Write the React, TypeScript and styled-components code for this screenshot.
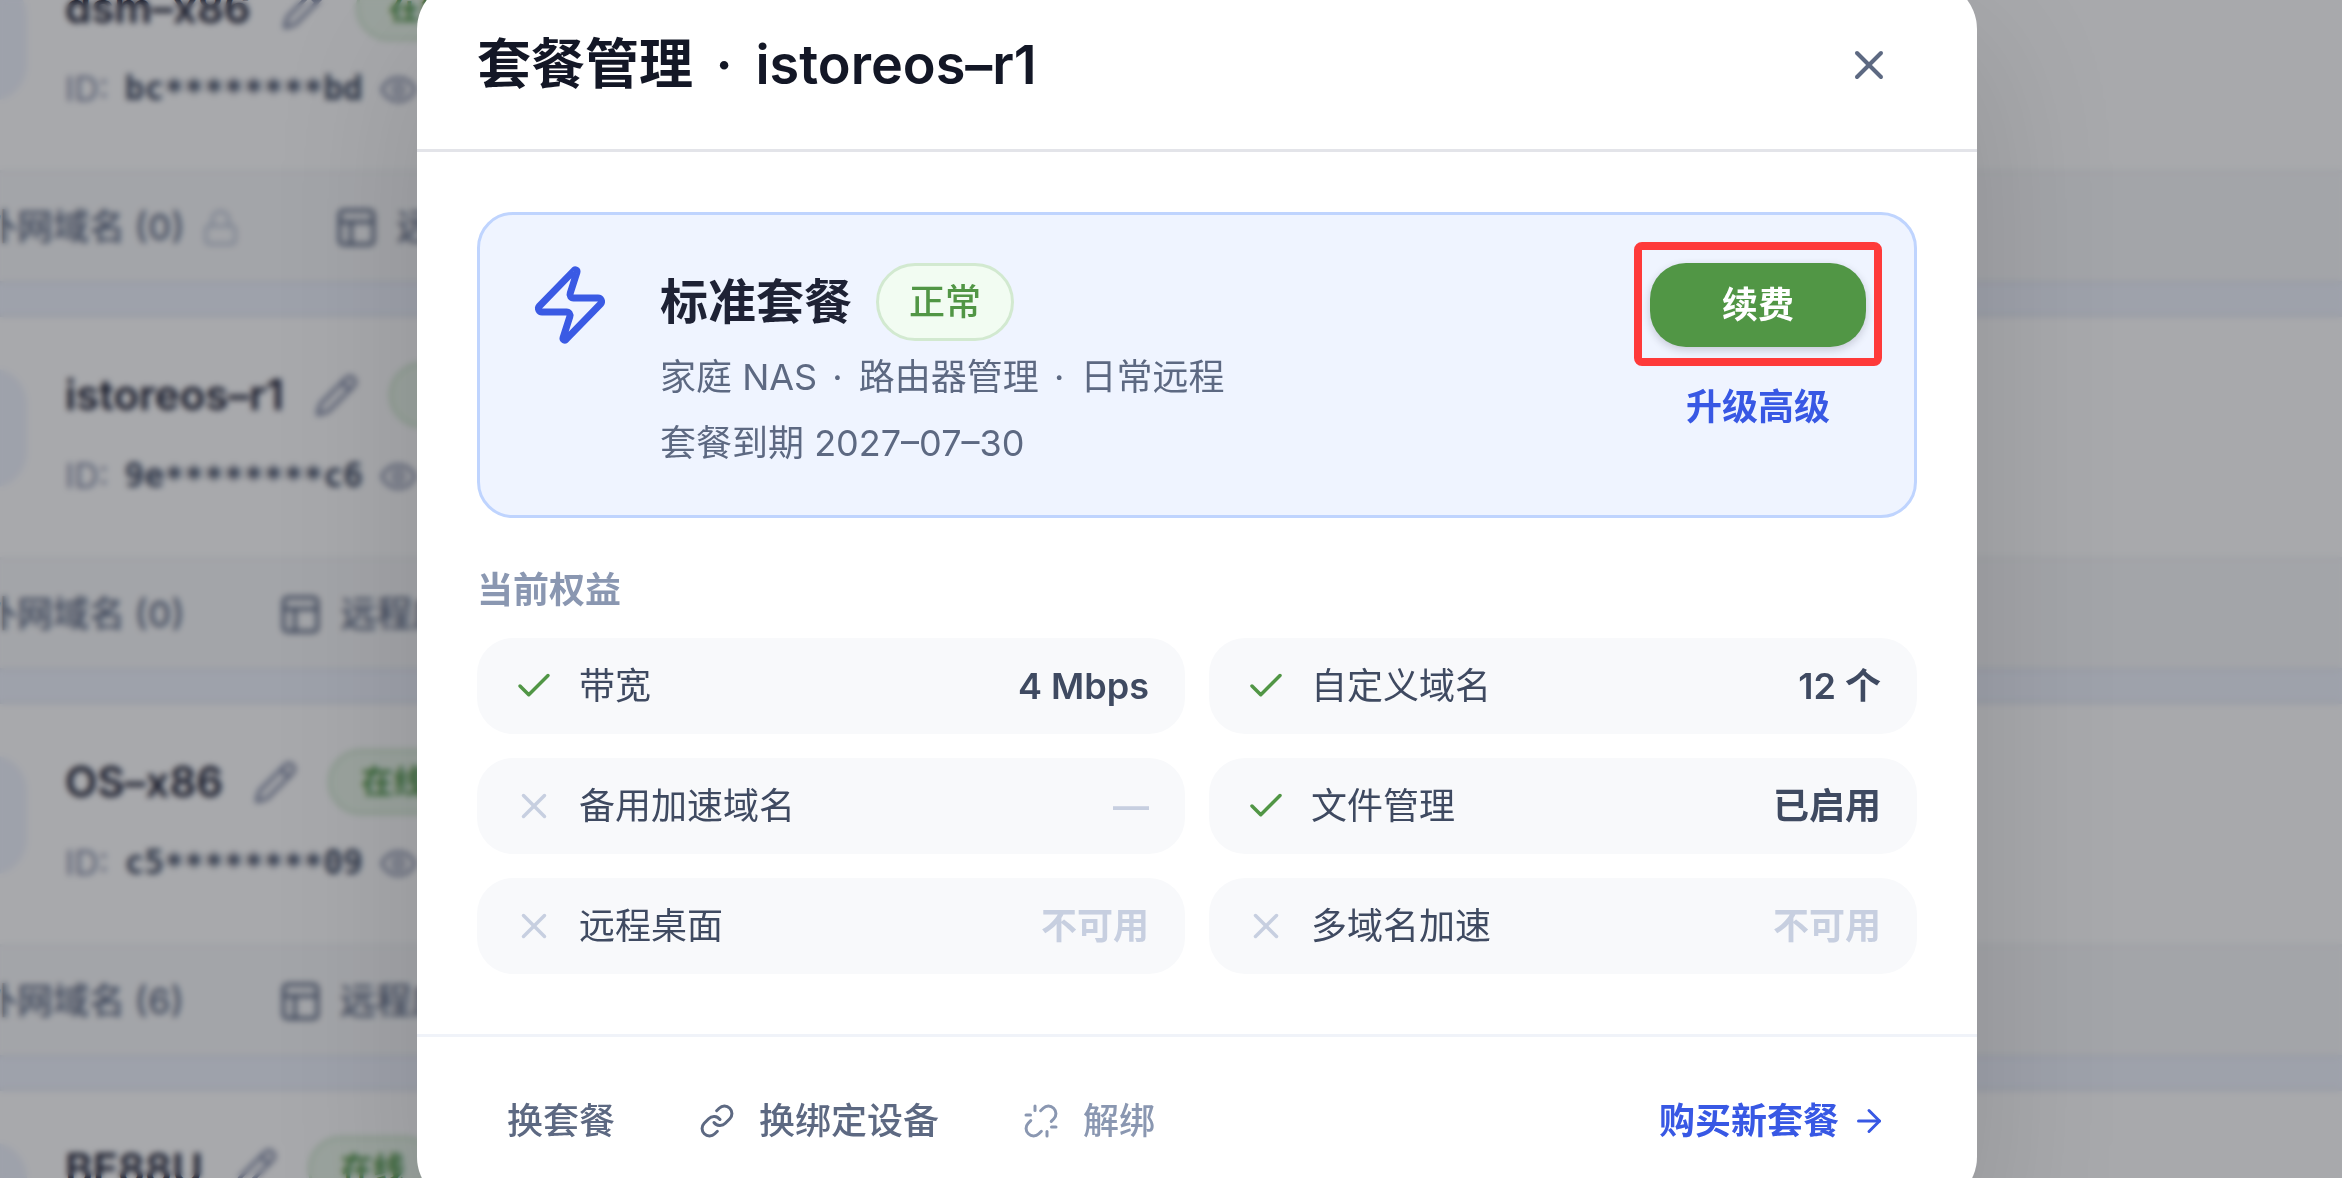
import React from "react";
import styled, { createGlobalStyle } from "styled-components";
import {
  ArrowRight,
  Box,
  Check,
  Eye,
  Globe,
  Link as LinkIcon,
  Lock,
  PanelsTopLeft,
  Pencil,
  Unlink,
  X,
  Zap,
} from "lucide-react";

const GlobalStyle = createGlobalStyle`
  *, *::before, *::after { box-sizing: border-box; }
  html, body, #root { height: 100%; }
  body {
    margin: 0;
    overflow: hidden;
    background: #f0f4fe;
    color: #1c2033;
    font-family: Inter, "Noto Sans CJK SC", sans-serif;
    font-size: 36px;
    line-height: 54px;
  }
  h1, h2, h3, p, ul, dl, dd { margin: 0; padding: 0; }
  ul { list-style: none; }
  button { font: inherit; border: 0; background: none; padding: 0; cursor: pointer; }
  svg { display: block; flex: none; }
`;

/* ---------- device list behind the dialog ---------- */

const Page = styled.main`
  height: 100%;
  overflow: hidden;
`;

const DeviceList = styled.ul`
  display: flex;
  flex-direction: column;
  gap: 36px;
  margin: -70px 0 0 -141px;
`;

const DeviceCard = styled.li`
  flex: none;
  background: #fff;
  box-shadow: 0 0 6px rgba(28, 32, 51, 0.12);
`;

const DeviceInfo = styled.div`
  display: flex;
  gap: 38px;
  height: 243px;
  padding: 51px 48px;
  border-bottom: 3px solid #f2f3f6;
`;

const Avatar = styled.div`
  display: grid;
  place-items: center;
  width: 120px;
  height: 120px;
  border-radius: 36px;
  background: #f0f4fe;
  color: #5d6982;
`;

const DeviceText = styled.div`
  display: flex;
  flex-direction: column;
  gap: 21px;
  margin-top: -6px;
`;

const DeviceHead = styled.div`
  display: flex;
  align-items: center;
  gap: 30px;
  height: 66px;
`;

const DeviceName = styled.h2`
  font-size: 42px;
  line-height: 54px;
  font-weight: 600;
`;

const GhostButton = styled.button`
  color: #7f88a3;
`;

const OnlineBadge = styled.span`
  padding: 3px 30px;
  border: 3px solid #cfe6cd;
  border-radius: 33px;
  background: #eaf6e9;
  color: #4f9448;
  font-size: 32px;
  font-weight: 600;
`;

const DeviceId = styled.div`
  display: flex;
  align-items: center;
  gap: 16px;
  color: #7f88a3;
  font-size: 34px;
`;

const Code = styled.code`
  display: flex;
  color: #3f4a61;
  font-family: "DejaVu Sans Mono", "Liberation Mono", monospace;
  font-size: 33px;
  font-weight: 700;
`;

const Stars = styled.span`
  padding-top: 6px;
  line-height: 48px;
`;

const TabStrip = styled.nav`
  display: flex;
  align-items: center;
  gap: 94px;
  height: 108px;
  padding: 0 60px;
  background: #f8f9fa;
`;

const Tab = styled.button`
  display: flex;
  align-items: center;
  gap: 17px;
  color: #5d6982;
  font-weight: 500;
  white-space: nowrap;
`;

const FaintLock = styled(Lock)`
  color: #bcc5d6;
`;

/* ---------- dialog ---------- */

const Scrim = styled.div`
  position: fixed;
  inset: 0;
  display: flex;
  justify-content: center;
  align-items: flex-start;
  padding-left: 52px;
  overflow: hidden;
  background: rgba(15, 17, 26, 0.36);
  backdrop-filter: blur(3px);
`;

const Dialog = styled.section`
  flex: none;
  width: 100%;
  max-width: 1560px;
  margin-top: -19px;
  border-radius: 48px;
  background: #fff;
  box-shadow: 0 60px 150px rgba(0, 0, 0, 0.14);
`;

const DialogHeader = styled.header`
  display: flex;
  align-items: center;
  justify-content: space-between;
  padding: 48px 84px 48px 60px;
  border-bottom: 3px solid #e3e4e9;
`;

const DialogTitle = styled.h1`
  color: #131726;
  font-size: 54px;
  line-height: 72px;
  font-weight: 600;
`;

const Dot = styled.span<{ $wide?: boolean }>`
  padding: 0 ${(p) => (p.$wide ? 9 : 6)}px 0 ${(p) => (p.$wide ? 9 : 5)}px;
`;

const CloseButton = styled.button`
  color: #5d6982;
`;

const DialogBody = styled.div`
  padding: 60px;
`;

const PlanCard = styled.div`
  display: flex;
  gap: 48px;
  padding: 48px 48px 45px;
  border: 3px solid #bfd4fe;
  border-radius: 36px;
  background: #eff4ff;
`;

const PlanIcon = styled(Zap)`
  color: #3a5ae4;
`;

const PlanText = styled.div`
  flex: 1;
  color: #5d6982;
`;

const PlanHead = styled.div`
  display: flex;
  align-items: center;
  gap: 24px;
  margin-bottom: 9px;
`;

const PlanName = styled.h2`
  color: #1e2235;
  font-size: 48px;
  line-height: 72px;
  font-weight: 600;
`;

const StatusBadge = styled.span`
  padding: 9px 30px;
  border: 3px solid #d2e9d0;
  border-radius: 39px;
  background: #f2fcf2;
  color: #519645;
  font-weight: 500;
`;

const Expiry = styled.p`
  margin-top: 12px;
`;

const PlanActions = styled.div`
  display: flex;
  flex-direction: column;
  align-items: center;
  gap: 33px;
`;

const RenewButton = styled.button`
  position: relative;
  width: 216px;
  height: 84px;
  border-radius: 36px;
  background: #519645;
  box-shadow: 0 3px 9px rgba(28, 32, 51, 0.2);
  color: #fff;
  font-weight: 600;
`;

const Highlight = styled.span`
  position: absolute;
  inset: -21px -16px -19px;
  border: 8px solid #fe3a3a;
  border-radius: 8px;
  pointer-events: none;
`;

const TextButton = styled.button`
  color: #3858e4;
  font-weight: 600;
`;

const SectionTitle = styled.h3`
  margin: 45px 0 21px;
  color: #8a97b1;
  font-size: 36px;
  font-weight: 600;
`;

const Benefits = styled.dl`
  display: grid;
  grid-template-columns: 1fr 1fr;
  gap: 24px;
`;

const Benefit = styled.div<{ $on: boolean }>`
  display: flex;
  align-items: center;
  gap: 24px;
  height: 96px;
  padding: 0 36px;
  border-radius: 36px;
  background: #f8f9fb;
  color: ${(p) => (p.$on ? "#519645" : "#c7cfe0")};

  dt {
    flex: 1;
    color: #3f4a61;
  }
  dd {
    color: ${(p) => (p.$on ? "#3f4a61" : "#c7cfe0")};
    font-weight: 600;
  }
`;

const DialogFooter = styled.footer`
  display: flex;
  align-items: center;
  gap: 24px;
  padding: 42px 60px;
  border-top: 3px solid #f0f3f9;
`;

const FooterButton = styled.button<{ $tone: string; $gap?: number }>`
  display: flex;
  align-items: center;
  gap: ${(p) => p.$gap ?? 24}px;
  height: 84px;
  padding: 0 30px;
  color: ${(p) => p.$tone};
  font-weight: 500;

  &:last-child {
    margin-left: auto;
    font-weight: 600;
  }
`;

type Device = { name: string; head: string; tail: string; domains: number; locked?: boolean };

const devices: Device[] = [
  { name: "dsm–x86", head: "bc", tail: "bd", domains: 0, locked: true },
  { name: "istoreos–r1", head: "9e", tail: "c6", domains: 0 },
  { name: "OS–x86", head: "c5", tail: "09", domains: 6 },
  { name: "BE88U", head: "a1", tail: "4f", domains: 0 },
];

const benefits = [
  { label: "带宽", value: "4 Mbps", on: true },
  { label: "自定义域名", value: "12 个", on: true },
  { label: "备用加速域名", value: "—", on: false },
  { label: "文件管理", value: "已启用", on: true },
  { label: "远程桌面", value: "不可用", on: false },
  { label: "多域名加速", value: "不可用", on: false },
];

function DeviceItem({ device }: { device: Device }) {
  return (
    <DeviceCard>
      <DeviceInfo>
        <Avatar>
          <Box size={78} />
        </Avatar>
        <DeviceText>
          <DeviceHead>
            <DeviceName>{device.name}</DeviceName>
            <GhostButton aria-label="重命名">
              <Pencil size={45} />
            </GhostButton>
            <OnlineBadge>在线</OnlineBadge>
          </DeviceHead>
          <DeviceId>
            <span>ID:</span>
            <Code>
              {device.head}
              <Stars>********</Stars>
              {device.tail}
            </Code>
            <GhostButton aria-label="显示 ID">
              <Eye size={39} />
            </GhostButton>
          </DeviceId>
        </DeviceText>
      </DeviceInfo>
      <TabStrip>
        <Tab>
          <Globe size={45} />
          外网域名 ({device.domains})
          {device.locked && <FaintLock size={39} />}
        </Tab>
        <Tab>
          <PanelsTopLeft size={45} />
          远程应用
        </Tab>
      </TabStrip>
    </DeviceCard>
  );
}

export default function App() {
  return (
    <>
      <GlobalStyle />
      <Page>
        <DeviceList>
          {devices.map((d) => (
            <DeviceItem key={d.name} device={d} />
          ))}
        </DeviceList>
      </Page>
      <Scrim>
        <Dialog role="dialog" aria-modal="true" aria-labelledby="plan-title">
          <DialogHeader>
            <DialogTitle id="plan-title">
              套餐管理 <Dot $wide>·</Dot> istoreos–r1
            </DialogTitle>
            <CloseButton aria-label="关闭">
              <X size={48} />
            </CloseButton>
          </DialogHeader>
          <DialogBody>
            <PlanCard>
              <PlanIcon size={84} />
              <PlanText>
                <PlanHead>
                  <PlanName>标准套餐</PlanName>
                  <StatusBadge>正常</StatusBadge>
                </PlanHead>
                <p>
                  家庭 NAS <Dot>·</Dot> 路由器管理 <Dot>·</Dot> 日常远程
                </p>
                <Expiry>套餐到期 2027–07–30</Expiry>
              </PlanText>
              <PlanActions>
                <RenewButton>
                  续费
                  <Highlight />
                </RenewButton>
                <TextButton>升级高级</TextButton>
              </PlanActions>
            </PlanCard>
            <SectionTitle>当前权益</SectionTitle>
            <Benefits>
              {benefits.map((b) => (
                <Benefit key={b.label} $on={b.on}>
                  {b.on ? <Check size={42} /> : <X size={42} />}
                  <dt>{b.label}</dt>
                  <dd>{b.value}</dd>
                </Benefit>
              ))}
            </Benefits>
          </DialogBody>
          <DialogFooter>
            <FooterButton $tone="#5d6982">换套餐</FooterButton>
            <FooterButton $tone="#5d6982">
              <LinkIcon size={36} />
              换绑定设备
            </FooterButton>
            <FooterButton $tone="#8a97b1">
              <Unlink size={36} />
              解绑
            </FooterButton>
            <FooterButton $tone="#3858e4" $gap={12}>
              购买新套餐
              <ArrowRight size={36} />
            </FooterButton>
          </DialogFooter>
        </Dialog>
      </Scrim>
    </>
  );
}
